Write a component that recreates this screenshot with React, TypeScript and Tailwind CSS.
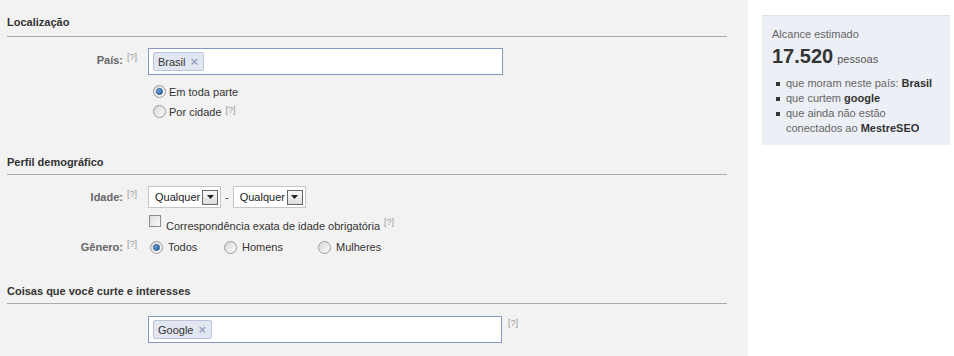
import React from "react";

const font = { fontFamily: '"Liberation Sans", Arial, sans-serif' };

function Help({ className = "" }: { className?: string }) {
  return <span className={`block shrink-0 text-[9px] leading-[10px] text-[#999] ${className}`}>[?]</span>;
}

function Label({ text, className = "" }: { text: string; className?: string }) {
  return (
    <div className={`flex w-[130px] shrink-0 items-start justify-end ${className}`}>
      <span className="block text-[11px] font-bold leading-[14px] text-[#666]">{text}</span>
      <Help className="ml-[4px] -mt-[1px]" />
    </div>
  );
}

function Heading({ title, className = "" }: { title: string; className?: string }) {
  return (
    <div className={`border-b border-[#aaa] ${className}`}>
      <h2 className="text-[11px] font-bold leading-[14px] text-[#333]">{title}</h2>
    </div>
  );
}

function Radio({ checked }: { checked?: boolean }) {
  return (
    <span className="flex h-[13px] w-[13px] shrink-0 items-center justify-center rounded-full border border-[#9a9a9a] bg-gradient-to-br from-[#d8d8d8] to-[#fbfbfb]">
      {checked && (
        <span className="h-[7px] w-[7px] rounded-full border border-[#1c4f86] bg-gradient-to-br from-[#7fb6e6] to-[#1e5fa8]" />
      )}
    </span>
  );
}

function Token({ text }: { text: string }) {
  return (
    <span className="flex h-[19px] items-center rounded-[2px] border border-[#b9c3da] bg-[#e2e6f0] pl-[4px] pr-[5px] text-[11px] leading-[14px] text-[#333]">
      {text}
      <span className="ml-[5px] text-[13px] font-bold leading-[14px] text-[#9aa6c4]">×</span>
    </span>
  );
}

function Select() {
  return (
    <div className="flex h-[22px] w-[73px] items-center border border-[#c6c6c6] bg-white pl-[6px] pr-[2px]">
      <span className="flex-1 text-[11px] leading-[14px] text-[#222]">Qualquer</span>
      <span className="flex h-[15px] w-[16px] items-center justify-center border border-[#666] bg-gradient-to-b from-[#fafafa] to-[#dcdcdc]">
        <svg width="7" height="4" viewBox="0 0 7 4">
          <path d="M0 0h7L3.5 4z" fill="#222" />
        </svg>
      </span>
    </div>
  );
}

export default function App() {
  return (
    <div className="flex min-h-[356px] w-[954px]" style={font}>
      <div className="w-[748px] shrink-0 bg-[#f2f2f2] pb-[14px] pl-[7px] pr-[21px]">
        <Heading title="Localização" className="pb-[7px] pt-[15px]" />

        <div className="mt-[11px] flex">
          <Label text="País:" className="pt-[5px]" />
          <div className="ml-[11px]">
            <div className="flex h-[27px] w-[355px] items-start border border-[#8397c1] bg-white pl-[4px] pt-[3px]">
              <Token text="Brasil" />
            </div>
            <div className="mt-[7px] flex h-[20px] items-center pl-[5px]">
              <span className="-mt-[2px]">
                <Radio checked />
              </span>
              <span className="ml-[3px] text-[11px] leading-[14px] text-[#333]">Em toda parte</span>
            </div>
            <div className="flex h-[20px] items-center pl-[5px]">
              <span className="-mt-[2px]">
                <Radio />
              </span>
              <span className="ml-[3px] text-[11px] leading-[14px] text-[#333]">Por cidade</span>
              <Help className="-mt-[5px] ml-[4px]" />
            </div>
          </div>
        </div>

        <Heading title="Perfil demográfico" className="mt-[33px] pb-[5px]" />

        <div className="mt-[11px] flex">
          <Label text="Idade:" className="pt-[4px]" />
          <div className="ml-[11px] flex items-center">
            <Select />
            <span className="mx-[4px] text-[11px] leading-[14px] text-[#333]">-</span>
            <Select />
          </div>
        </div>
        <div className="flex">
          <div className="w-[130px] shrink-0" />
          <div className="ml-[12px] flex items-start">
            <span className="mt-[7px] h-[12px] w-[12px] border border-[#8c8c8c] bg-gradient-to-br from-[#dcdcdc] to-[#fafafa]" />
            <span className="ml-[5px] mt-[11px] text-[11px] leading-[14px] text-[#333]">
              Correspondência exata de idade obrigatória
            </span>
            <Help className="ml-[4px] mt-[9px]" />
          </div>
        </div>
        <div className="mt-[6px] flex h-[16px] items-center">
          <Label text="Gênero:" />
          <div className="ml-[11px] flex items-center">
            <span className="ml-[2px]">
              <Radio checked />
            </span>
            <span className="ml-[5px] w-[56px] text-[11px] leading-[14px] text-[#333]">Todos</span>
            <Radio />
            <span className="ml-[5px] w-[76px] text-[11px] leading-[14px] text-[#333]">Homens</span>
            <Radio />
            <span className="ml-[5px] text-[11px] leading-[14px] text-[#333]">Mulheres</span>
          </div>
        </div>

        <Heading title="Coisas que você curte e interesses" className="mt-[29px] pb-[5px]" />

        <div className="mt-[12px] flex">
          <div className="w-[130px] shrink-0" />
          <div className="ml-[11px] flex items-start">
            <div className="flex h-[27px] w-[354px] items-start border border-[#8397c1] bg-white pl-[4px] pt-[3px]">
              <Token text="Google" />
            </div>
            <Help className="ml-[6px] mt-[2px]" />
          </div>
        </div>
      </div>

      <div className="flex-1 bg-white">
        <div className="ml-[14px] mt-[15px] w-[188px] border-t border-[#dfe3ec] bg-[#eceff5] pb-[9px] pl-[10px] pt-[11px]">
          <p className="text-[11px] leading-[14px] text-[#666]">Alcance estimado</p>
          <p className="mt-[4px] leading-[22px] text-[#333]">
            <span className="text-[20px] font-bold">17.520</span>
            <span className="ml-[4px] text-[11px] text-[#555]">pessoas</span>
          </p>
          <ul className="mt-[6px] text-[11px] leading-[15px] text-[#666]">
            <li className="flex">
              <span className="ml-[4px] mr-[6px] mt-[6px] h-[4px] w-[4px] shrink-0 bg-[#333]" />
              <span>
                que moram neste país: <b className="text-[#333]">Brasil</b>
              </span>
            </li>
            <li className="flex">
              <span className="ml-[4px] mr-[6px] mt-[6px] h-[4px] w-[4px] shrink-0 bg-[#333]" />
              <span>
                que curtem <b className="text-[#333]">google</b>
              </span>
            </li>
            <li className="flex">
              <span className="ml-[4px] mr-[6px] mt-[6px] h-[4px] w-[4px] shrink-0 bg-[#333]" />
              <span>
                que ainda não estão
                <br />
                conectados ao <b className="text-[#333]">MestreSEO</b>
              </span>
            </li>
          </ul>
        </div>
      </div>
    </div>
  );
}
